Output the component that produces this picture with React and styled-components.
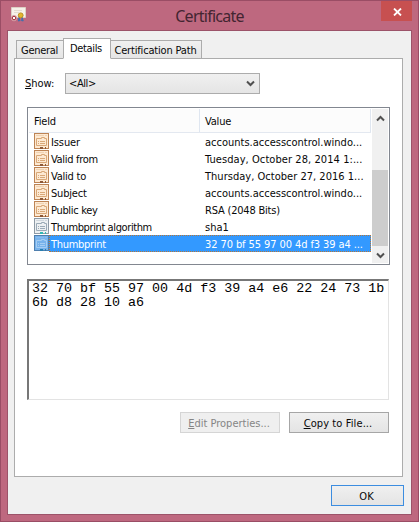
import React from 'react';
import styled, { createGlobalStyle } from 'styled-components';

const Global = createGlobalStyle`
  * { box-sizing: border-box; }
  body { margin: 0; font: 11px/17px "DejaVu Sans Condensed", "DejaVu Sans", sans-serif; font-stretch: condensed; color: #080808; }
`;
const Window = styled.main`
  width: 419px; height: 522px; display: flex; flex-direction: column;
  background: #be687f; border: 1px solid #9a4d65; padding: 0 6px 6px;
`;
const TitleBar = styled.header`
  height: 29px; flex: none; display: grid; grid-template-columns: 45px 1fr 45px; align-items: start;
`;
const AppIcon = styled.svg`
  width: 16px; height: 16px; margin: 6px 0 0 4px;
`;
const Title = styled.h1`
  margin: 3px 0 0; text-align: center; color: #432531;
  font: 400 16px/24px "Noto Sans", "Open Sans", sans-serif; letter-spacing: -0.75px;
`;
const Close = styled.button`
  width: 31px; height: 20px; padding: 2px 0 0 1px; margin-left: 14px; border: 0; background: #c75050;
  display: flex; align-items: center; justify-content: center;
`;
const Client = styled.div`
  flex: 1; border: 1px solid #9c5369; background: #f0f0f0; padding: 7px 8px 8px 6px;
  display: flex; flex-direction: column;
`;
const Tabs = styled.nav`
  height: 21px; flex: none; display: flex; align-items: flex-end; padding-left: 2px; z-index: 1; margin-bottom: -1px;
`;
const Tab = styled.button`
  width: ${p => p.$w}px; height: ${p => (p.$active ? 21 : 19)}px; flex: none; margin-right: -1px;
  padding: ${p => (p.$active ? '0 2px 1px 0' : '1px 1px 0 0')};
  border: 1px solid #acacac; border-bottom-color: ${p => (p.$active ? '#fff' : '#acacac')};
  background: ${p => (p.$active ? '#fff' : 'linear-gradient(#f0f0f0, #e5e5e5)')};
  z-index: ${p => (p.$active ? 1 : 0)}; font: inherit; color: inherit; line-height: 17px;
  letter-spacing: ${p => p.$ls || 0}px; white-space: nowrap;
`;
const Panel = styled.section`
  width: 389px; height: 419px; flex: none; border: 1px solid #acacac; background: #fff;
  padding: 14px 13px 0 12px; display: flex; flex-direction: column;
`;
const ShowRow = styled.div`
  display: flex; height: 21px; align-items: center; margin-left: -2px;
`;
const Label = styled.label`
  width: 40px;
`;
const Select = styled.div`
  width: 195px; height: 21px; border: 1px solid #acacac; background: linear-gradient(#f0f0f0, #e5e5e5);
  display: flex; align-items: center; justify-content: space-between; padding: 0 4px 0 3px;
`;
const List = styled.div`
  width: 363px; height: 158px; margin-top: 13px; border: 1px solid #828790; padding: 1px;
  display: flex; justify-content: space-between;
`;
const Table = styled.div`
  width: 342px;
`;
const Head = styled.div`
  height: 24px; display: grid; grid-template-columns: 171px 171px; line-height: 25px;
  background: #fcfcfc; border-bottom: 1px solid #e3e8f0;
`;
const HeadCell = styled.div`
  height: 23px; border-right: 1px solid #dfe6f0; padding-left: 5px; letter-spacing: -0.2px;
`;
const Row = styled.div`
  height: 17px; display: grid; grid-template-columns: 20px 1fr;
`;
const RowText = styled.div`
  height: 17px; display: grid; grid-template-columns: 154px 1fr; padding: 1px 0 0 2px; line-height: 18px;
  white-space: nowrap; color: ${p => (p.$selected ? '#fff' : 'inherit')};
  background: ${p => (p.$selected ? '#3399ff' : 'transparent')};
  outline: ${p => (p.$selected ? '1px dotted #b77636' : 'none')}; outline-offset: -1px;
`;
const Text = styled.span`
  letter-spacing: ${p => p.$ls || 0}px;
`;
const RowIcon = styled.svg`
  width: 15px; height: 17px; margin-left: 5px;
`;
const Scroll = styled.div`
  width: 16px; height: 154px; background: #f0f0f0; display: grid; grid-template-rows: 61px 76px 17px;
`;
const ScrollEnd = styled.div`
  display: flex; justify-content: center; padding-top: ${p => p.$pad}px;
`;
const Thumb = styled.div`
  background: #cdcdcd;
`;
const Output = styled.div`
  width: 362px; height: 121px; margin-top: 14px; padding: 1px 0 0 3px; white-space: pre;
  border: 2px solid; border-color: #777 #e3e3e3 #e3e3e3 #777; border-right-width: 1px; border-bottom-width: 1px;
  font: 13.35px/14px "Liberation Mono", monospace; color: #000;
`;
const Actions = styled.div`
  display: flex; justify-content: flex-end; gap: 9px; margin-top: 12px;
`;
const Button = styled.button`
  width: ${p => p.$w || 100}px; height: 21px; padding: 2px 2px 0 0; white-space: nowrap;
  font: inherit; line-height: 17px; letter-spacing: ${p => p.$ls || 0}px;
  color: ${p => (p.disabled ? '#858585' : '#080808')};
  border: 1px solid ${p => (p.disabled ? '#d5d5d5' : p.$primary ? '#3c8de0' : '#a6a6a6')};
  background: ${p => (p.disabled ? '#efefef' : 'linear-gradient(#f0f0f0, #e4e4e4)')};
`;
const Footer = styled.footer`
  display: flex; justify-content: flex-end; margin-top: 8px; margin-right: -1px;
`;

const Chevron = ({ up }) => (
  <svg width="9" height="7" viewBox="0 0 9 7">
    <path d={up ? 'M1 5.5 4.5 2 8 5.5' : 'M1 1.5 4.5 5 8 1.5'} fill="none" stroke="#505050" strokeWidth="2" />
  </svg>
);

const FieldIcon = ({ kind }) => {
  const [line, fill, ink, dot] = {
    normal: ['#bd8455', '#fde9d2', '#d9a878', '#8d5836'],
    property: ['#8e9aa5', '#edf0f2', '#9baab7', '#31b8b4'],
    selected: ['#507fae', '#78b3ec', '#a6cef3', '#287fb0'],
  }[kind];
  return (
    <RowIcon viewBox="0 0 15 17">
      <rect x=".5" y=".5" width="14" height="15" fill={fill} stroke={line} />
      <path d="M2 2.5h8m1 0h2" stroke={ink} opacity=".35" />
      <path d="M2.5 5.5h5v-1h3v1h2v7h-10z" fill={fill} stroke={ink} />
      <path d="M4 8.5h1m1 0h5M4 10.5h1m1 0h5" stroke={ink} />
      <path d="M6 15h3m2 0h1" stroke={dot} strokeWidth="2" />
    </RowIcon>
  );
};

const rows = [
  ['Issuer', 'accounts.accesscontrol.windo...', 'normal', -0.1, 0],
  ['Valid from', 'Tuesday, October 28, 2014 1:...', 'normal', -0.32, 0.07],
  ['Valid to', 'Thursday, October 27, 2016 1...', 'normal', -0.22, 0.02],
  ['Subject', 'accounts.accesscontrol.windo...', 'normal', -0.2, 0],
  ['Public key', 'RSA (2048 Bits)', 'normal', -0.32, -0.2],
  ['Thumbprint algorithm', 'sha1', 'property', -0.39, 0],
  ['Thumbprint', '32 70 bf 55 97 00 4d f3 39 a4 ...', 'selected', -0.3, -0.09],
];

export default function App() {
  return (
    <Window>
      <Global />
      <TitleBar>
        <AppIcon viewBox="0 0 16 16">
          <path d="M.5.5h14v10H.5z" fill="#f6f1e9" stroke="#ddd0c6" />
          <path d="M3 3.5h8M3 5.5h5" stroke="#e3dacf" />
          <path d="m8.3 9-1 5 2-.5M10.7 9l1.5 5-2-.5" fill="#426fad" stroke="#426fad" />
          <circle cx="9.7" cy="8.3" r="2.4" fill="#e5b52d" stroke="#b98f22" />
          <circle cx="3" cy="11" r="2.8" fill="#a93b45" stroke="#e9d5d5" strokeWidth=".6" />
          <path d="m1.8 9.8 2.4 2.4m0-2.4-2.4 2.4" stroke="#fff" />
        </AppIcon>
        <Title>Certificate</Title>
        <Close aria-label="Close">
          <svg width="9" height="8" viewBox="0 0 9 8"><path d="m1 .5 7 7m0-7-7 7" stroke="#fff" strokeWidth="1.8" /></svg>
        </Close>
      </TitleBar>
      <Client>
        <Tabs>
          <Tab $w={48} $ls={-0.3}>General</Tab>
          <Tab $w={48} $ls={-0.35} $active>Details</Tab>
          <Tab $w={92} $ls={-0.17}>Certification Path</Tab>
        </Tabs>
        <Panel>
          <ShowRow>
            <Label><u>S</u>how:</Label>
            <Select><Text $ls={-0.4}>&lt;All&gt;</Text><Chevron /></Select>
          </ShowRow>
          <List>
            <Table>
              <Head><HeadCell>Field</HeadCell><HeadCell>Value</HeadCell></Head>
              {rows.map(([field, value, kind, fieldSpacing, valueSpacing]) => (
                <Row key={field}>
                  <FieldIcon kind={kind} />
                  <RowText $selected={kind === 'selected'}>
                    <Text $ls={fieldSpacing}>{field}</Text>
                    <Text $ls={valueSpacing}>{value}</Text>
                  </RowText>
                </Row>
              ))}
            </Table>
            <Scroll>
              <ScrollEnd $pad={6}><Chevron up /></ScrollEnd>
              <Thumb />
              <ScrollEnd $pad={6}><Chevron /></ScrollEnd>
            </Scroll>
          </List>
          <Output>{'32 70 bf 55 97 00 4d f3 39 a4 e6 22 24 73 1b\n6b d8 28 10 a6'}</Output>
          <Actions>
            <Button disabled><u>E</u>dit Properties...</Button>
            <Button $ls={0.1}><u>C</u>opy to File...</Button>
          </Actions>
        </Panel>
        <Footer><Button $w={73} $primary>OK</Button></Footer>
      </Client>
    </Window>
  );
}
